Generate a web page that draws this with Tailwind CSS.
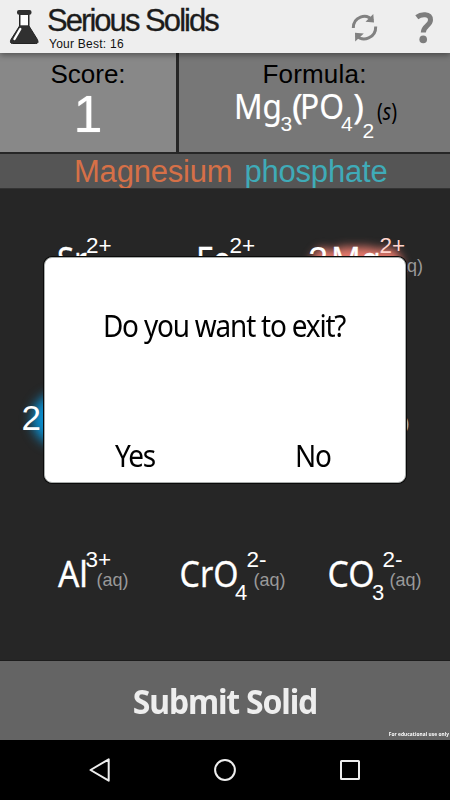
<!DOCTYPE html>
<html lang="en">
<head>
<meta charset="utf-8">
<title>Serious Solids</title>
<script src="https://cdn.jsdelivr.net/npm/@tailwindcss/browser@4"></script>
</head>
<body class="bg-black">
<div class="relative w-[450px] h-[800px] overflow-hidden flex flex-col bg-[#262626] font-['Liberation_Sans',Arial,sans-serif]">

  <header class="relative z-10 h-[53px] shrink-0 flex bg-[#eeeeee] shadow-[0_2px_6px_rgba(0,0,0,0.4)]">
    <svg class="w-[47px] h-[53px] shrink-0" viewBox="0 0 47 53">
      <path d="M19.500 12V26L11 39.500Q9.300 43.500 12.500 43.500H35.800Q39.200 43.500 37.400 39.500L29 26V12Z" fill="#303030" stroke="#222" stroke-width="1"/>
      <path d="M20.500 15H28V25.300H20.500Z" fill="#fff"/>
      <rect x="17" y="10" width="14.500" height="4.700" rx="2" fill="#303030"/>
      <path d="M20.300 29L14.500 39" stroke="#fff" stroke-width="2.400" stroke-linecap="round"/>
    </svg>
    <div class="flex-1 pt-[4px]">
      <h1 class="text-[31px] leading-[34px] tracking-[-1.950px] text-[#1c1c1c] [-webkit-text-stroke:0.3px_#1c1c1c] whitespace-nowrap">Serious Solids</h1>
      <p class="pl-[2px] text-[12px] leading-[12px] tracking-[0.25px] text-[#111]">Your Best: 16</p>
    </div>
    <svg class="w-[100px] h-[53px] shrink-0" viewBox="350 0 100 53" fill="none" stroke="#818181">
      <path d="M353.300 28C353.300 17 366 12.500 372.500 20.500" stroke-width="3"/>
      <path d="M375.700 26.500C376 38 363 42.500 356.500 35.500" stroke-width="3"/>
      <path d="M373.300 14L374 22.500L365.500 21.700Z" fill="#818181" stroke="none"/>
      <path d="M355 32.800L363.800 33.600L355.200 41.500Z" fill="#818181" stroke="none"/>
      <path d="M416.800 17.200C421 14 430.500 13.200 430.500 20C430.500 25.500 423.300 25.800 423.300 32.500" stroke="#7d7d7d" stroke-width="5"/>
      <circle cx="423.200" cy="39.400" r="3.800" fill="#7d7d7d" stroke="none"/>
    </svg>
  </header>

  <section class="h-[99px] shrink-0 flex">
    <div class="w-[176px] bg-[#888888] text-center">
      <p class="text-[26px] leading-[43px] text-black">Score:</p>
      <p class="text-[52px] leading-[37px] text-white [text-shadow:0_0_1px_rgba(255,255,255,0.6)]">1</p>
    </div>
    <div class="flex-1 border-l-[3px] border-[#262626] bg-[#777777]">
      <p class="text-[26px] leading-[43px] tracking-[0.2px] text-black text-center">Formula:</p>
      <svg class="w-[271px] h-[56px] overflow-visible" viewBox="179 96 271 56" fill="#fff">
        <g class="font-['Noto_Sans',sans-serif] [text-shadow:0_0_1px_rgba(255,255,255,0.4)]" font-size="34">
          <text x="234" y="119" textLength="48" lengthAdjust="spacingAndGlyphs">Mg</text>
          <text x="292" y="119" textLength="11" lengthAdjust="spacingAndGlyphs">(</text>
          <text x="300" y="119" textLength="44" lengthAdjust="spacingAndGlyphs">PO</text>
          <text x="353" y="119" textLength="11" lengthAdjust="spacingAndGlyphs">)</text>
        </g>
        <g font-size="21">
          <text x="280.500" y="131">3</text>
          <text x="341" y="131">4</text>
          <text x="362.500" y="138">2</text>
        </g>
        <text class="font-['Noto_Sans',sans-serif]" x="377" y="119.500" font-size="23" fill="#000" textLength="20" lengthAdjust="spacingAndGlyphs">(<tspan font-style="italic">s</tspan>)</text>
      </svg>
    </div>
  </section>

  <section class="h-[36px] shrink-0 flex bg-[#555555] border-t-2 border-[#262626] pl-[74px] text-[31px] leading-[36px] tracking-[-0.200px] gap-[12px]">
    <span class="text-[#d67047]">Magnesium</span><span class="text-[#3fabb8]">phosphate</span>
  </section>

  <main class="h-[472px] shrink-0 grid grid-cols-3 grid-rows-3 font-['Noto_Sans',sans-serif] border-t border-[#333]">
    <svg class="w-[150px] h-[157px]" viewBox="0 0 150 157" fill="#fff" stroke-width="0.300">
      <text x="57" y="84" font-size="37" textLength="30" lengthAdjust="spacingAndGlyphs" stroke="#fff">Sr</text>
      <text class="font-['Liberation_Sans',sans-serif]" x="86" y="64" font-size="22.500">2+</text>
    </svg>
    <svg class="w-[150px] h-[157px]" viewBox="0 0 150 157" fill="#fff" stroke-width="0.300">
      <text x="46" y="84" font-size="37" textLength="35" lengthAdjust="spacingAndGlyphs" stroke="#fff">Fe</text>
      <text class="font-['Liberation_Sans',sans-serif]" x="79.500" y="64" font-size="22.500">2+</text>
    </svg>
    <svg class="w-[150px] h-[157px] overflow-visible" viewBox="0 0 150 157" fill="#fff" stroke-width="0.300">
      <path class="blur-[5px]" d="M9 78Q13 60 24 59Q34 64 42 58H68Q80 62 90 59Q102 62 103 80L95 96H12Z" fill="#e5796c"/>
      <text class="font-['Liberation_Sans',sans-serif]" x="8" y="84" font-size="36">2</text>
      <text x="31" y="84" font-size="37" textLength="50" lengthAdjust="spacingAndGlyphs" stroke="#fff">Mg</text>
      <text class="font-['Liberation_Sans',sans-serif]" x="79.500" y="64" font-size="22.500" fill="#ffd5ce">2+</text>
      <text class="font-['Liberation_Sans',sans-serif]" x="91" y="83" font-size="19" textLength="32" lengthAdjust="spacingAndGlyphs" fill="#999">(aq)</text>
    </svg>
    <svg class="w-[150px] h-[157px] overflow-visible" viewBox="0 0 150 157" fill="#fff">
      <ellipse class="blur-[6px]" cx="57" cy="73" rx="25" ry="26" fill="#0a8fd0"/>
      <text class="font-['Liberation_Sans',sans-serif]" x="21.500" y="83.500" font-size="35">2</text>
    </svg>
    <div></div>
    <svg class="w-[150px] h-[157px]" viewBox="0 0 150 157">
      <text class="font-['Liberation_Sans',sans-serif]" x="77.500" y="83" font-size="19" textLength="32" lengthAdjust="spacingAndGlyphs" fill="#aaa">(aq)</text>
    </svg>
    <svg class="w-[150px] h-[157px]" viewBox="0 0 150 157" fill="#fff" stroke-width="0.300">
      <text x="58" y="84" font-size="37" textLength="30" lengthAdjust="spacingAndGlyphs" stroke="#fff">Al</text>
      <text class="font-['Liberation_Sans',sans-serif]" x="85.500" y="64" font-size="22.500">3+</text>
      <text class="font-['Liberation_Sans',sans-serif]" x="96.500" y="83" font-size="19" textLength="32" lengthAdjust="spacingAndGlyphs" fill="#999">(aq)</text>
    </svg>
    <svg class="w-[150px] h-[157px]" viewBox="0 0 150 157" fill="#fff" stroke-width="0.300">
      <text x="29.500" y="84" font-size="37" textLength="59" lengthAdjust="spacingAndGlyphs" stroke="#fff">CrO</text>
      <text class="font-['Liberation_Sans',sans-serif]" x="85" y="96.500" font-size="22">4</text>
      <text class="font-['Liberation_Sans',sans-serif]" x="96.500" y="64" font-size="22.500">2-</text>
      <text class="font-['Liberation_Sans',sans-serif]" x="103.500" y="83" font-size="19" textLength="32" lengthAdjust="spacingAndGlyphs" fill="#999">(aq)</text>
    </svg>
    <svg class="w-[150px] h-[157px]" viewBox="0 0 150 157" fill="#fff" stroke-width="0.300">
      <text x="27.500" y="84" font-size="37" textLength="47" lengthAdjust="spacingAndGlyphs" stroke="#fff">CO</text>
      <text class="font-['Liberation_Sans',sans-serif]" x="72" y="96.500" font-size="22">3</text>
      <text class="font-['Liberation_Sans',sans-serif]" x="82.500" y="64" font-size="22.500">2-</text>
      <text class="font-['Liberation_Sans',sans-serif]" x="89.500" y="83" font-size="19" textLength="32" lengthAdjust="spacingAndGlyphs" fill="#999">(aq)</text>
    </svg>
  </main>

  <footer class="h-[80px] shrink-0 flex flex-col bg-[#646464] border-t border-[#1c1c1c] font-['Noto_Sans',sans-serif]">
    <button class="pt-[20px] text-[34px] leading-[40px] font-bold tracking-[-1.250px] text-[#eee] whitespace-nowrap scale-x-[0.94]">Submit Solid</button>
    <p class="mt-[8px] pr-px text-right text-[5.500px] leading-[10px] font-bold text-white tracking-[0.1px] origin-right scale-x-[0.87]">For educational use only</p>
  </footer>

  <nav class="h-[60px] shrink-0 flex items-center bg-black pl-[87px] gap-[101px]">
    <svg class="w-[24px] h-[26px]" viewBox="87 757 24 26" fill="none" stroke="#eee" stroke-width="2" stroke-linejoin="round"><path d="M108.700 759.300V780.700L90.500 770Z"/></svg>
    <svg class="w-[24px] h-[24px]" viewBox="0 0 24 24" fill="none" stroke="#eee" stroke-width="2"><circle cx="13" cy="12" r="9.900"/></svg>
    <svg class="w-[24px] h-[24px]" viewBox="0 0 24 24" fill="none" stroke="#eee" stroke-width="2"><rect x="4" y="3" width="18" height="18" rx=".5"/></svg>
  </nav>

  <div role="dialog" class="absolute z-20 left-[44px] top-[257px] w-[362px] h-[226px] flex flex-col justify-between rounded-[8px] border border-[#a9adab] bg-white shadow-[0_0_0_1px_#0a0a0a] pt-[47px] pb-[7px] font-['Noto_Sans',sans-serif] text-[31px] leading-[40px] tracking-[-1.300px] text-black text-center whitespace-nowrap">
    <p class="pr-[2px] scale-x-[0.9]">Do you want to exit?</p>
    <div class="grid grid-cols-2">
      <button class="scale-x-[0.9]">Yes</button>
      <button class="pr-[5px] scale-x-[0.9]">No</button>
    </div>
  </div>
</div>
</body>
</html>
